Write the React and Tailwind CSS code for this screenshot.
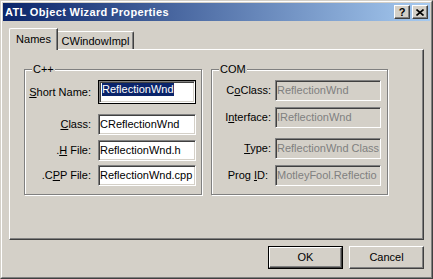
import React from "react";

const font = "font-['Liberation_Sans',Arial,sans-serif]";

const sunken =
  "border-t border-l border-b border-r border-t-[#808080] border-l-[#808080] border-b-white border-r-white shadow-[inset_1px_1px_0_#404040,inset_-1px_-1px_0_#d4d0c8]";

const raised =
  "border-t border-l border-b border-r border-t-white border-l-white border-b-[#404040] border-r-[#404040] shadow-[inset_-1px_-1px_0_#808080] bg-[#d4d0c8]";

function Label({ children, width, className = "" }) {
  return (
    <div className={`shrink-0 text-right text-[11px] leading-[13px] text-black ${width} ${className}`}>
      {children}
    </div>
  );
}

function Edit({ value, disabled, width }) {
  return (
    <div
      className={`${sunken} ${width} h-[21px] flex items-center pl-[1px] overflow-hidden whitespace-nowrap text-[11px] leading-[13px] ${
        disabled ? "bg-[#d4d0c8] text-[#808080]" : "bg-white text-black"
      }`}
    >
      {value}
    </div>
  );
}

function Group({ title, width, children }) {
  return (
    <div
      className={`relative ${width} h-[126px] border border-[#808080] shadow-[inset_1px_1px_0_white,1px_1px_0_white]`}
    >
      <span className="absolute left-[7px] top-[-7px] bg-[#d4d0c8] px-[1px] text-[11px] leading-[13px] text-black">
        {title}
      </span>
      {children}
    </div>
  );
}

function Button({ children, isDefault }) {
  const inner = (
    <div className={`${raised} w-full h-full flex items-center justify-center text-[11px] text-black`}>
      {children}
    </div>
  );
  if (isDefault) {
    return <div className="w-[75px] h-[23px] border border-black">{inner}</div>;
  }
  return <div className="w-[75px] h-[23px]">{inner}</div>;
}

export default function App() {
  return (
    <div className={`${font} w-[433px] h-[279px] bg-[#d4d0c8] border border-t-[#d4d0c8] border-l-[#d4d0c8] border-b-[#404040] border-r-[#404040] select-none`}>
      <div className="h-full border border-t-white border-l-white border-b-[#808080] border-r-[#808080] p-px flex flex-col">
        {/* title bar */}
        <div className="h-[18px] shrink-0 flex items-center justify-between pl-[2px] pr-[2px] bg-[linear-gradient(to_right,#0a246a,#a6caf0)]">
          <span className="text-white font-bold text-[11px] leading-[13px] tracking-[0.35px]">ATL Object Wizard Properties</span>
          <div className="flex gap-[2px]">
            <div className={`${raised} w-[16px] h-[14px] flex items-center justify-center text-[11px] font-bold leading-none text-black`}>
              ?
            </div>
            <div className={`${raised} w-[16px] h-[14px] flex items-center justify-center`}>
              <svg width="8" height="7" viewBox="0 0 8 7">
                <path d="M0.5 0.5 L7.5 6.5 M7.5 0.5 L0.5 6.5" stroke="black" strokeWidth="1.6" fill="none" />
              </svg>
            </div>
          </div>
        </div>

        <div className="px-[6px] flex flex-col">
          {/* tabs */}
          <div className="mt-[7px] h-[21px] flex items-end relative z-10">
            <div className="w-[49px] h-[22px] -mb-px bg-[#d4d0c8] border-t border-l border-r border-t-white border-l-white border-r-[#404040] rounded-tl-[2px] shadow-[inset_-1px_0_0_#808080] flex items-start justify-center pt-[4px] text-[11px] leading-[13px] text-black">
              Names
            </div>
            <div className="w-[76px] h-[18px] bg-[#d4d0c8] border-t border-r border-t-white border-r-[#404040] rounded-tr-[2px] shadow-[inset_-1px_0_0_#808080] flex items-start justify-center pt-[3px] text-[11px] leading-[13px] text-black">
              CWindowImpl
            </div>
          </div>

          {/* panel */}
          <div className="h-[191px] border border-t-white border-l-white border-b-[#404040] border-r-[#404040] shadow-[inset_-1px_-1px_0_#808080] pl-[14px] pt-[19px] flex gap-[9px]">
            <Group title="C++" width="w-[178px]">
              <div className="flex flex-col pt-[10px]">
                <div className="flex items-center gap-[7px] h-[24px]">
                  <Label width="w-[66px]">
                    <u>S</u>hort Name:
                  </Label>
                  <div className="w-[98px] h-[24px] border border-black">
                    <div className={`${sunken} h-full bg-white flex items-start pt-[1px] pl-[2px] text-[11px] leading-[13px] whitespace-nowrap overflow-hidden`}>
                      <span className="bg-[#0a246a] text-white">ReflectionWnd</span>
                    </div>
                  </div>
                </div>
                <div className="flex items-center gap-[7px] mt-[10px]">
                  <Label width="w-[66px]">
                    <u>C</u>lass:
                  </Label>
                  <Edit value="CReflectionWnd" width="w-[98px]" />
                </div>
                <div className="flex items-center gap-[7px] mt-[5px]">
                  <Label width="w-[66px]">
                    .<u>H</u> File:
                  </Label>
                  <Edit value="ReflectionWnd.h" width="w-[98px]" />
                </div>
                <div className="flex items-center gap-[7px] mt-[4px]">
                  <Label width="w-[66px]">
                    .C<u>P</u>P File:
                  </Label>
                  <Edit value="ReflectionWnd.cpp" width="w-[98px]" />
                </div>
              </div>
            </Group>

            <Group title="COM" width="w-[177px]">
              <div className="flex flex-col pt-[10px]">
                <div className="flex items-center gap-[4px]">
                  <Label width="w-[59px]">
                    C<u>o</u>Class:
                  </Label>
                  <Edit value="ReflectionWnd" width="w-[106px]" disabled />
                </div>
                <div className="flex items-center gap-[4px] mt-[6px]">
                  <Label width="w-[59px]">
                    I<u>n</u>terface:
                  </Label>
                  <Edit value="IReflectionWnd" width="w-[106px]" disabled />
                </div>
                <div className="flex items-center gap-[4px] mt-[10px]">
                  <Label width="w-[59px]">
                    <u>T</u>ype:
                  </Label>
                  <Edit value="ReflectionWnd Class" width="w-[106px]" disabled />
                </div>
                <div className="flex items-center gap-[4px] mt-[6px]">
                  <Label width="w-[59px]" className="pr-[3px]">
                    Prog <u>I</u>D:
                  </Label>
                  <Edit value="MotleyFool.Reflectio" width="w-[106px]" disabled />
                </div>
              </div>
            </Group>
          </div>

          {/* buttons */}
          <div className="mt-[6px] flex justify-end gap-[6px]">
            <Button isDefault>OK</Button>
            <Button>Cancel</Button>
          </div>
        </div>
      </div>
    </div>
  );
}
